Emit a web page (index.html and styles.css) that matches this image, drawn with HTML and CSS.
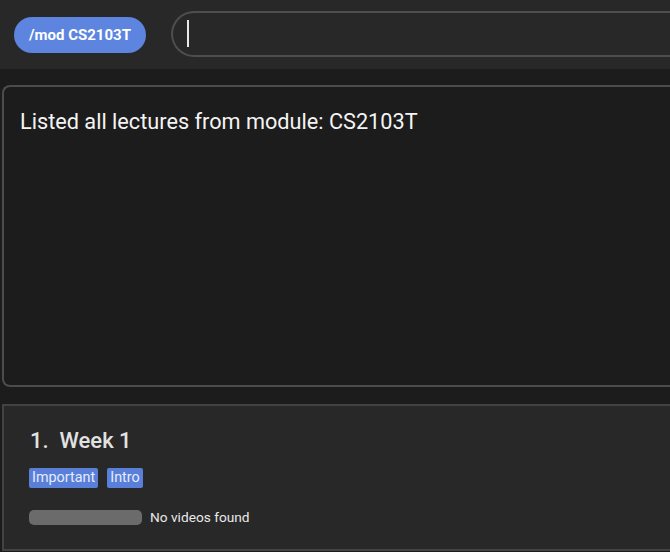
FILE: index.html
```html
<!DOCTYPE html>
<html>
<head>
<meta charset="utf-8">
<link rel="stylesheet" href="styles.css">
</head>
<body>
<div class="app">
  <div class="topbar">
    <div class="mod-btn">/mod CS2103T</div>
    <div class="cmd-input"><span class="caret"></span></div>
  </div>
  <div class="result">Listed all lectures from module: CS2103T</div>
  <div class="card">
    <div class="title">1.&nbsp; Week 1</div>
    <div class="tags">
      <span class="tag">Important</span>
      <span class="tag">Intro</span>
    </div>
    <div class="progress-row">
      <div class="progress"></div>
      <span class="progress-label">No videos found</span>
    </div>
  </div>
</div>
</body>
</html>
```
FILE: styles.css
```css
html, body {
  margin: 0;
  padding: 0;
  background: #1c1c1c;
  overflow: hidden;
}
.app {
  width: 700px;
  height: 552px;
  font-family: Roboto, "Liberation Sans", sans-serif;
  color: #f2f2f2;
}
.topbar {
  height: 69px;
  background: #282828;
  display: flex;
  align-items: center;
  padding-left: 14px;
  box-sizing: border-box;
}
.mod-btn {
  width: 132px;
  height: 36px;
  border-radius: 18px;
  background: #5d85e0;
  color: #ffffff;
  font-weight: bold;
  font-size: 15px;
  display: flex;
  align-items: center;
  justify-content: center;
}
.cmd-input {
  flex: 1;
  margin-left: 25px;
  height: 46px;
  margin-top: -2px;
  box-sizing: border-box;
  border: 2px solid #4e4e4e;
  border-radius: 24px 0 0 24px;
  border-right: none;
  display: flex;
  align-items: center;
  padding-left: 14px;
}
.caret {
  width: 2px;
  height: 27px;
  background: #e8e8e8;
}
.result {
  margin: 16px 0 0 2px;
  height: 302px;
  box-sizing: border-box;
  border: 2px solid #4c4c4c;
  border-right: none;
  border-radius: 8px 0 0 8px;
  padding: 22px 0 0 16px;
  font-size: 21.7px;
  color: #f4f4f4;
}
.card {
  margin: 17px 0 0 2px;
  height: 147px;
  box-sizing: border-box;
  background: #282828;
  border: 2px solid #434343;
  border-right: none;
  padding: 22px 0 0 26px;
}
.title {
  font-size: 22px;
  font-weight: 500;
  color: #e2e2e2;
  line-height: 26px;
}
.tags {
  display: flex;
  gap: 9px;
  margin: 14px 0 0 -1px;
}
.tag {
  background: #5a7fd8;
  color: #e4ecff;
  font-size: 14.4px;
  line-height: 20px;
  padding: 0 3px;
  border-radius: 2px;
}
.progress-row {
  display: flex;
  align-items: center;
  margin: 21px 0 0 -1px;
  gap: 8px;
}
.progress {
  width: 113px;
  height: 15px;
  border-radius: 5px;
  background: #6b6b6b;
}
.progress-label {
  font-size: 13.7px;
  color: #e8e8e8;
}
```
